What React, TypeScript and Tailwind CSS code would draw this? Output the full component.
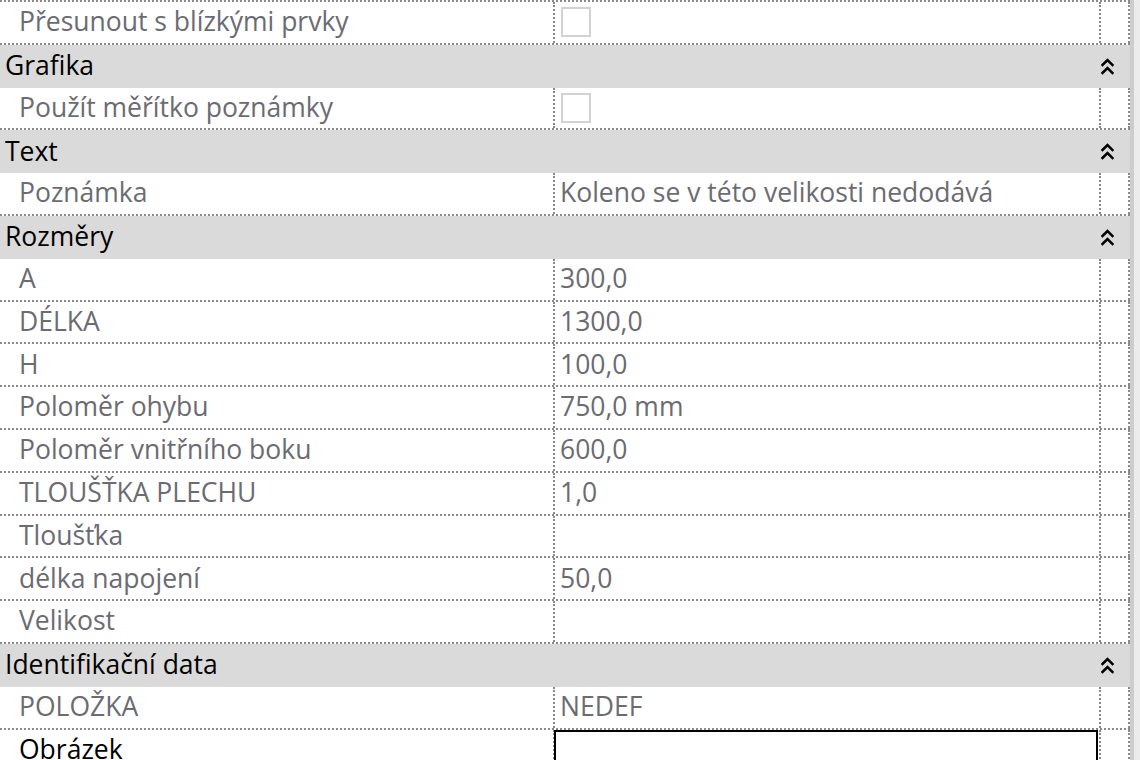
import React from "react";

type Row =
  | { kind: "header"; label: string }
  | { kind: "prop"; label: string; value?: string; checkbox?: boolean; active?: boolean; edit?: boolean };

const rows: Row[] = [
  { kind: "prop", label: "Přesunout s blízkými prvky", checkbox: true },
  { kind: "header", label: "Grafika" },
  { kind: "prop", label: "Použít měřítko poznámky", checkbox: true },
  { kind: "header", label: "Text" },
  { kind: "prop", label: "Poznámka", value: "Koleno se v této velikosti nedodává" },
  { kind: "header", label: "Rozměry" },
  { kind: "prop", label: "A", value: "300,0" },
  { kind: "prop", label: "DÉLKA", value: "1300,0" },
  { kind: "prop", label: "H", value: "100,0" },
  { kind: "prop", label: "Poloměr ohybu", value: "750,0 mm" },
  { kind: "prop", label: "Poloměr vnitřního boku", value: "600,0" },
  { kind: "prop", label: "TLOUŠŤKA PLECHU", value: "1,0" },
  { kind: "prop", label: "Tloušťka", value: "" },
  { kind: "prop", label: "délka napojení", value: "50,0" },
  { kind: "prop", label: "Velikost", value: "" },
  { kind: "header", label: "Identifikační data" },
  { kind: "prop", label: "POLOŽKA", value: "NEDEF" },
  { kind: "prop", label: "Obrázek", active: true, edit: true },
];

function Chevrons() {
  return (
    <svg width="13" height="19" viewBox="0 0 13 19" className="block">
      <polyline points="1.5,8 6.5,3 11.5,8" fill="none" stroke="#000" strokeWidth="2.6" strokeLinecap="square" />
      <polyline points="1.5,16 6.5,11 11.5,16" fill="none" stroke="#000" strokeWidth="2.6" strokeLinecap="square" />
    </svg>
  );
}

export default function App() {
  return (
    <div
      className="flex w-[1140px] h-[760px] overflow-hidden bg-white"
      style={{ fontFamily: '"Open Sans", "Noto Sans", sans-serif' }}
    >
      <div className="w-[1130px] shrink-0 flex flex-col border-t-2 border-dotted border-[#8a8a8a]">
        {rows.map((r, i) =>
          r.kind === "header" ? (
            <div key={i} className="h-[42.8px] shrink-0 flex items-center justify-between bg-[#dadada] pl-[5px]">
              <span className="text-[26.5px] text-black leading-none -mt-[2px]">{r.label}</span>
              <span className="mr-[16px]">
                <Chevrons />
              </span>
            </div>
          ) : (
            <div key={i} className="h-[42.8px] shrink-0 flex border-b-2 border-dotted border-[#8a8a8a]">
              <div
                className={`w-[555px] shrink-0 flex items-center pl-[19px] border-r-2 border-dotted border-[#8a8a8a] text-[26.5px] leading-none ${
                  r.active ? "text-black" : "text-[#6b6b72]"
                }`}
              >
                <span className="-mt-[2px]">{r.label}</span>
              </div>
              <div className="w-[546px] shrink-0 flex items-center border-r-2 border-dotted border-[#8a8a8a] text-[26.5px] leading-none text-[#6b6b72]">
                {r.checkbox ? (
                  <div className="ml-[6px] w-[30px] h-[30px] border-2 border-[#d2d2d2] bg-white" />
                ) : r.edit ? (
                  <div className="self-stretch w-full -ml-[1px] border-2 border-black border-b-0 bg-white" />
                ) : (
                  <span className="pl-[5px] -mt-[2px]">{r.value}</span>
                )}
              </div>
              <div className="w-[29px] shrink-0 border-r-2 border-dotted border-[#8a8a8a]" />
            </div>
          )
        )}
      </div>
      <div className="w-[4px] shrink-0 bg-[#cdcdcd]" />
      <div className="flex-1 bg-[#ececec]" />
    </div>
  );
}
